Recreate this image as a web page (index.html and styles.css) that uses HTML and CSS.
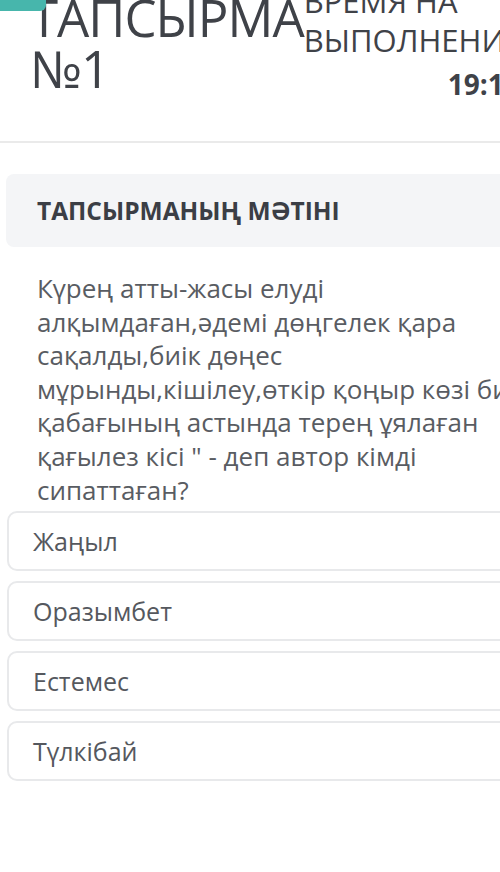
FILE: index.html
```html
<!DOCTYPE html>
<html lang="kk">
<head>
<meta charset="utf-8">
<title>Тапсырма №1</title>
<link rel="stylesheet" href="styles.css">
</head>
<body>
<div class="page">
  <button class="menu-btn" aria-label="Меню">
    <span class="bar"></span>
    <span class="bar"></span>
    <span class="bar"></span>
  </button>

  <header class="header">
    <h1 class="title">ТАПСЫРМА<br>№1</h1>
    <div class="timebox">
      <div class="time-label">ВРЕМЯ НА<br>ВЫПОЛНЕНИЯ</div>
      <div class="timer">19:18</div>
    </div>
  </header>

  <section class="task">
    <div class="task-head">ТАПСЫРМАНЫҢ МӘТІНІ</div>
    <p class="question">Күрең атты-жасы елуді алқымдаған,әдемі дөңгелек қара сақалды,биік дөңес мұрынды,кішілеу,өткір қоңыр көзі биік қабағының астында терең ұялаған қағылез кісі " - деп автор кімді сипаттаған?</p>
    <ul class="options">
      <li class="option">Жаңыл</li>
      <li class="option">Оразымбет</li>
      <li class="option">Естемес</li>
      <li class="option">Түлкібай</li>
    </ul>
  </section>
</div>
</body>
</html>
```

FILE: styles.css
```css
html, body {
  margin: 0;
  padding: 0;
  overflow: hidden;
  background: #ffffff;
}

body {
  font-family: "Open Sans", "Noto Sans", sans-serif;
  color: #44474d;
}

.page {
  position: relative;
  width: 550px;
}

/* hamburger button pinned in the top-left corner */
.menu-btn {
  position: absolute;
  left: 0;
  top: -22px;
  width: 46px;
  height: 50px;
  border: 0;
  padding: 0 0 22px 0;
  background: #47b6ac;
  border-bottom-right-radius: 6px;
  display: flex;
  flex-direction: column;
  justify-content: flex-end;
  gap: 6px;
  z-index: 2;
}

.menu-btn .bar {
  display: block;
  width: 27px;
  height: 3px;
  background: #ffffff;
}

.header {
  display: flex;
  align-items: flex-start;
  margin-top: -17px;
  padding-bottom: 37px;
  border-bottom: 2px solid #eaeaea;
}

.title {
  margin: 9px 0 0 30px;
  font-weight: 400;
  font-size: 51px;
  line-height: 51px;
  letter-spacing: -1px;
  color: #3f4248;
  white-space: nowrap;
}

.timebox {
  margin-left: 0;
  width: 216px;
  flex: none;
}

.time-label {
  font-size: 31px;
  line-height: 39px;
  margin-top: -1px;
  color: #3f4248;
  white-space: nowrap;
}

.timer {
  margin-top: 4px;
  font-size: 28px;
  line-height: 40px;
  font-weight: 700;
  text-align: right;
  color: #3f4248;
}

.task {
  padding: 31px 0 0 6px;
}

.task-head {
  background: #f4f5f7;
  border-radius: 8px;
  height: 73px;
  display: flex;
  align-items: center;
  padding-left: 31px;
  font-size: 24.5px;
  font-weight: 700;
  color: #3b3e45;
}

.question {
  width: 500px;
  margin: 25px 0 4px 31px;
  font-size: 26px;
  line-height: 33.6px;
  color: #595c62;
}

.options {
  list-style: none;
  margin: 0;
  padding: 0 0 0 1px;
  display: flex;
  flex-direction: column;
  gap: 10px;
}

.option {
  height: 60px;
  box-sizing: border-box;
  border: 2px solid #e8e9eb;
  border-radius: 10px;
  display: flex;
  align-items: center;
  padding-left: 24px;
  font-size: 25px;
  color: #55585e;
}
```
